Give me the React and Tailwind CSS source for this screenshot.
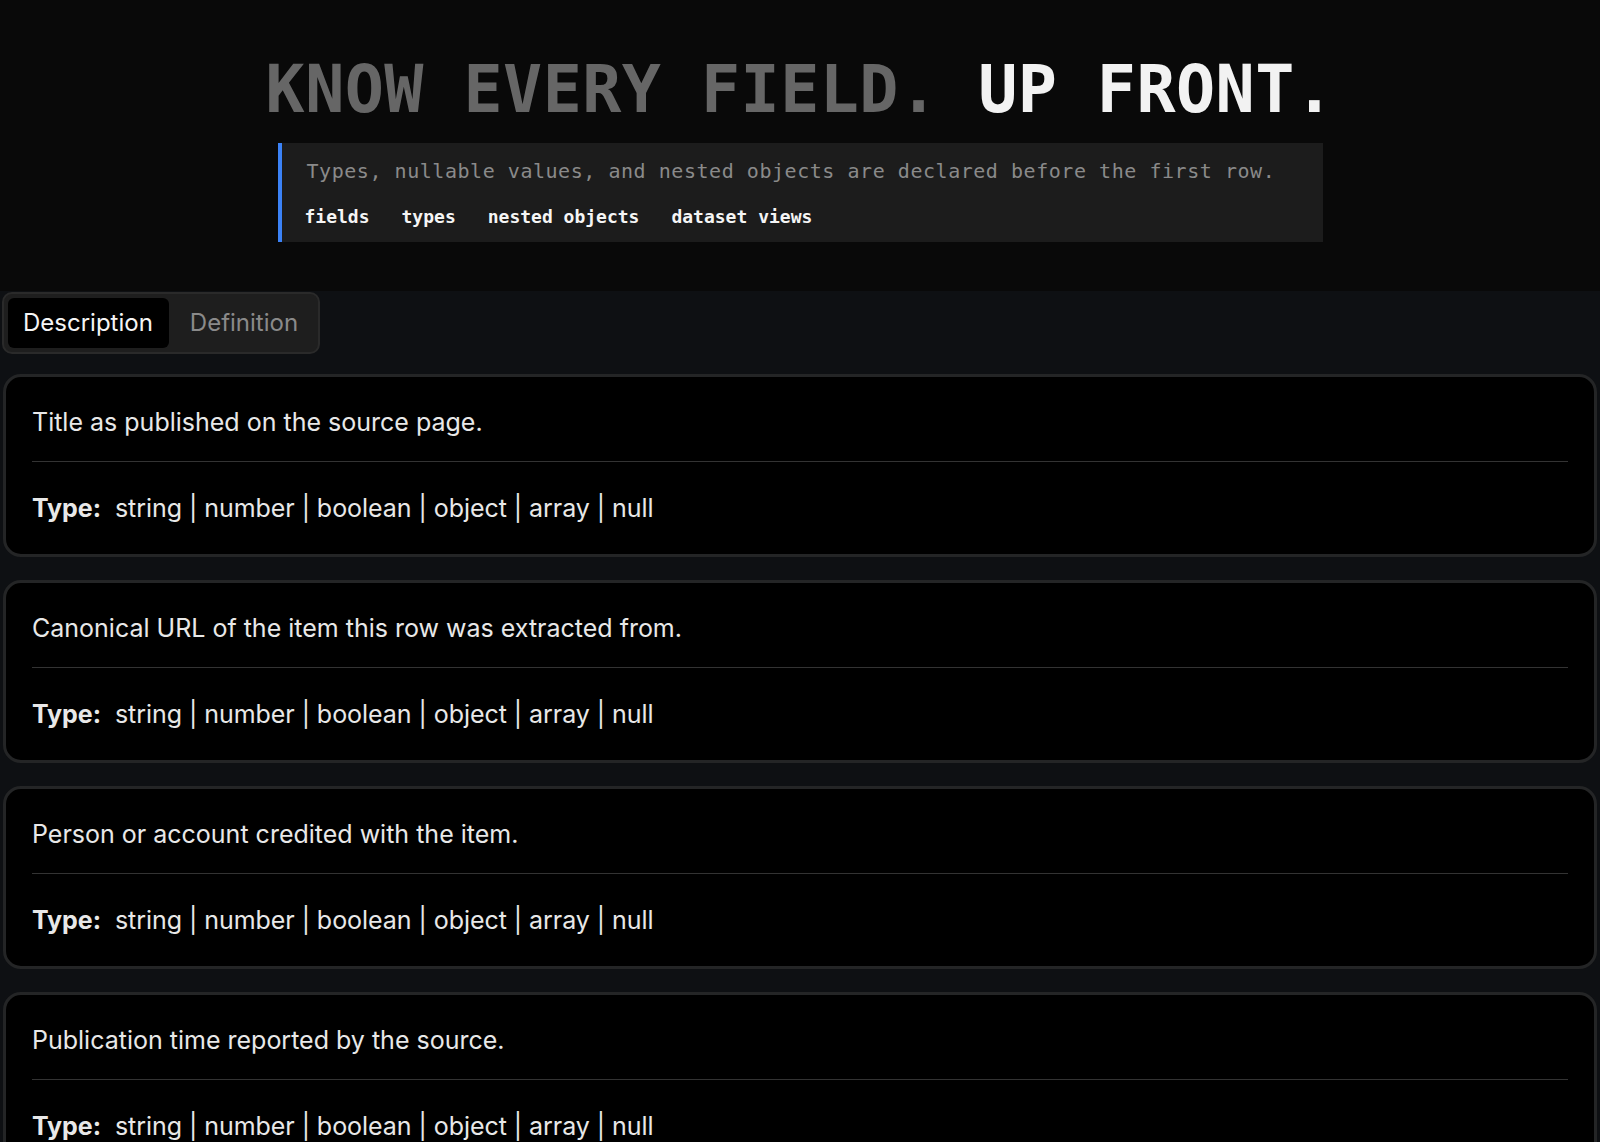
import { useState } from "react";

const FIELDS = [
    "Title as published on the source page.",
    "Canonical URL of the item this row was extracted from.",
    "Person or account credited with the item.",
    "Publication time reported by the source.",
];

const TYPES = ["string", "number", "boolean", "object", "array", "null"];
const TAGS = ["fields", "types", "nested objects", "dataset views"];

const mono = { fontFamily: "'DejaVu Sans Mono', 'Liberation Mono', monospace" };

export default function App() {
    const [tab, setTab] = useState("description");

    return (
        <div
            className="h-[1142px] overflow-hidden bg-[#0e1013]"
            style={{ fontFamily: "Inter, 'Noto Sans', sans-serif" }}
        >
            {/* Header */}
            <header className="bg-[#090909] h-[291px] pt-[57px]">
                <h1
                    className="text-center text-[65px] leading-[65px] font-bold tracking-[0.45px]"
                    style={mono}
                >
                    <span className="text-[#666666]">KNOW EVERY FIELD.</span>{" "}
                    <span className="text-[#f2f2f2]">UP FRONT.</span>
                </h1>

                <div
                    className="mx-auto mt-[21px] w-[1045px] border-l-4 border-[#3b82f6] bg-[#1c1c1c] pl-[25px] pr-5 pt-[14px] pb-[13px]"
                    style={mono}
                >
                    <p className="text-[20px] leading-[28px] tracking-[0.54px] text-[#8a8a8a]">
                        Types, nullable values, and nested objects are declared before the first row.
                    </p>
                    <div className="mt-5 -ml-0.5 flex gap-8 text-[18px] leading-[24px] font-bold text-[#f5f5f5]">
                        {TAGS.map((t) => (
                            <span key={t}>{t}</span>
                        ))}
                    </div>
                </div>
            </header>

            {/* Body */}
            <main className="px-[3px] pt-px">
                {/* Tabs */}
                <div className="-ml-px inline-flex gap-[6px] rounded-[10px] border-2 border-[#2a2a2a] bg-[#1e1e1e] p-1">
                    <button
                        onClick={() => setTab("description")}
                        className={`h-[50px] pl-[15px] pr-4 rounded-md text-2xl ${tab === "description"
                            ? "bg-black text-[#f5f5f5]"
                            : "text-[#8a8a8a]"
                            }`}
                    >
                        Description
                    </button>
                    <button
                        onClick={() => setTab("definition")}
                        className={`h-[50px] pl-[15px] pr-4 rounded-md text-2xl ${tab === "definition"
                            ? "bg-black text-[#f5f5f5]"
                            : "text-[#8a8a8a]"
                            }`}
                    >
                        Definition
                    </button>
                </div>

                {/* Field cards */}
                <div className="mt-5 flex flex-col gap-[23px]">
                    {FIELDS.map((desc) => (
                        <div
                            key={desc}
                            className="rounded-[18px] border-[3px] border-[#242526] bg-black px-[26px] pt-[29px] pb-[30px]"
                        >
                            <p className="text-[25px] leading-8 text-[#e8e8e8]">{desc}</p>
                            <div className="mt-[23px] h-px bg-[#333333]" />
                            <p className="mt-[30px] text-[25px] leading-8 tracking-[-0.05px] text-[#e8e8e8]">
                                <span className="font-bold mr-[14px]">Type:</span>
                                {TYPES.join(" | ")}
                            </p>
                        </div>
                    ))}
                </div>
            </main>
        </div>
    );
}
